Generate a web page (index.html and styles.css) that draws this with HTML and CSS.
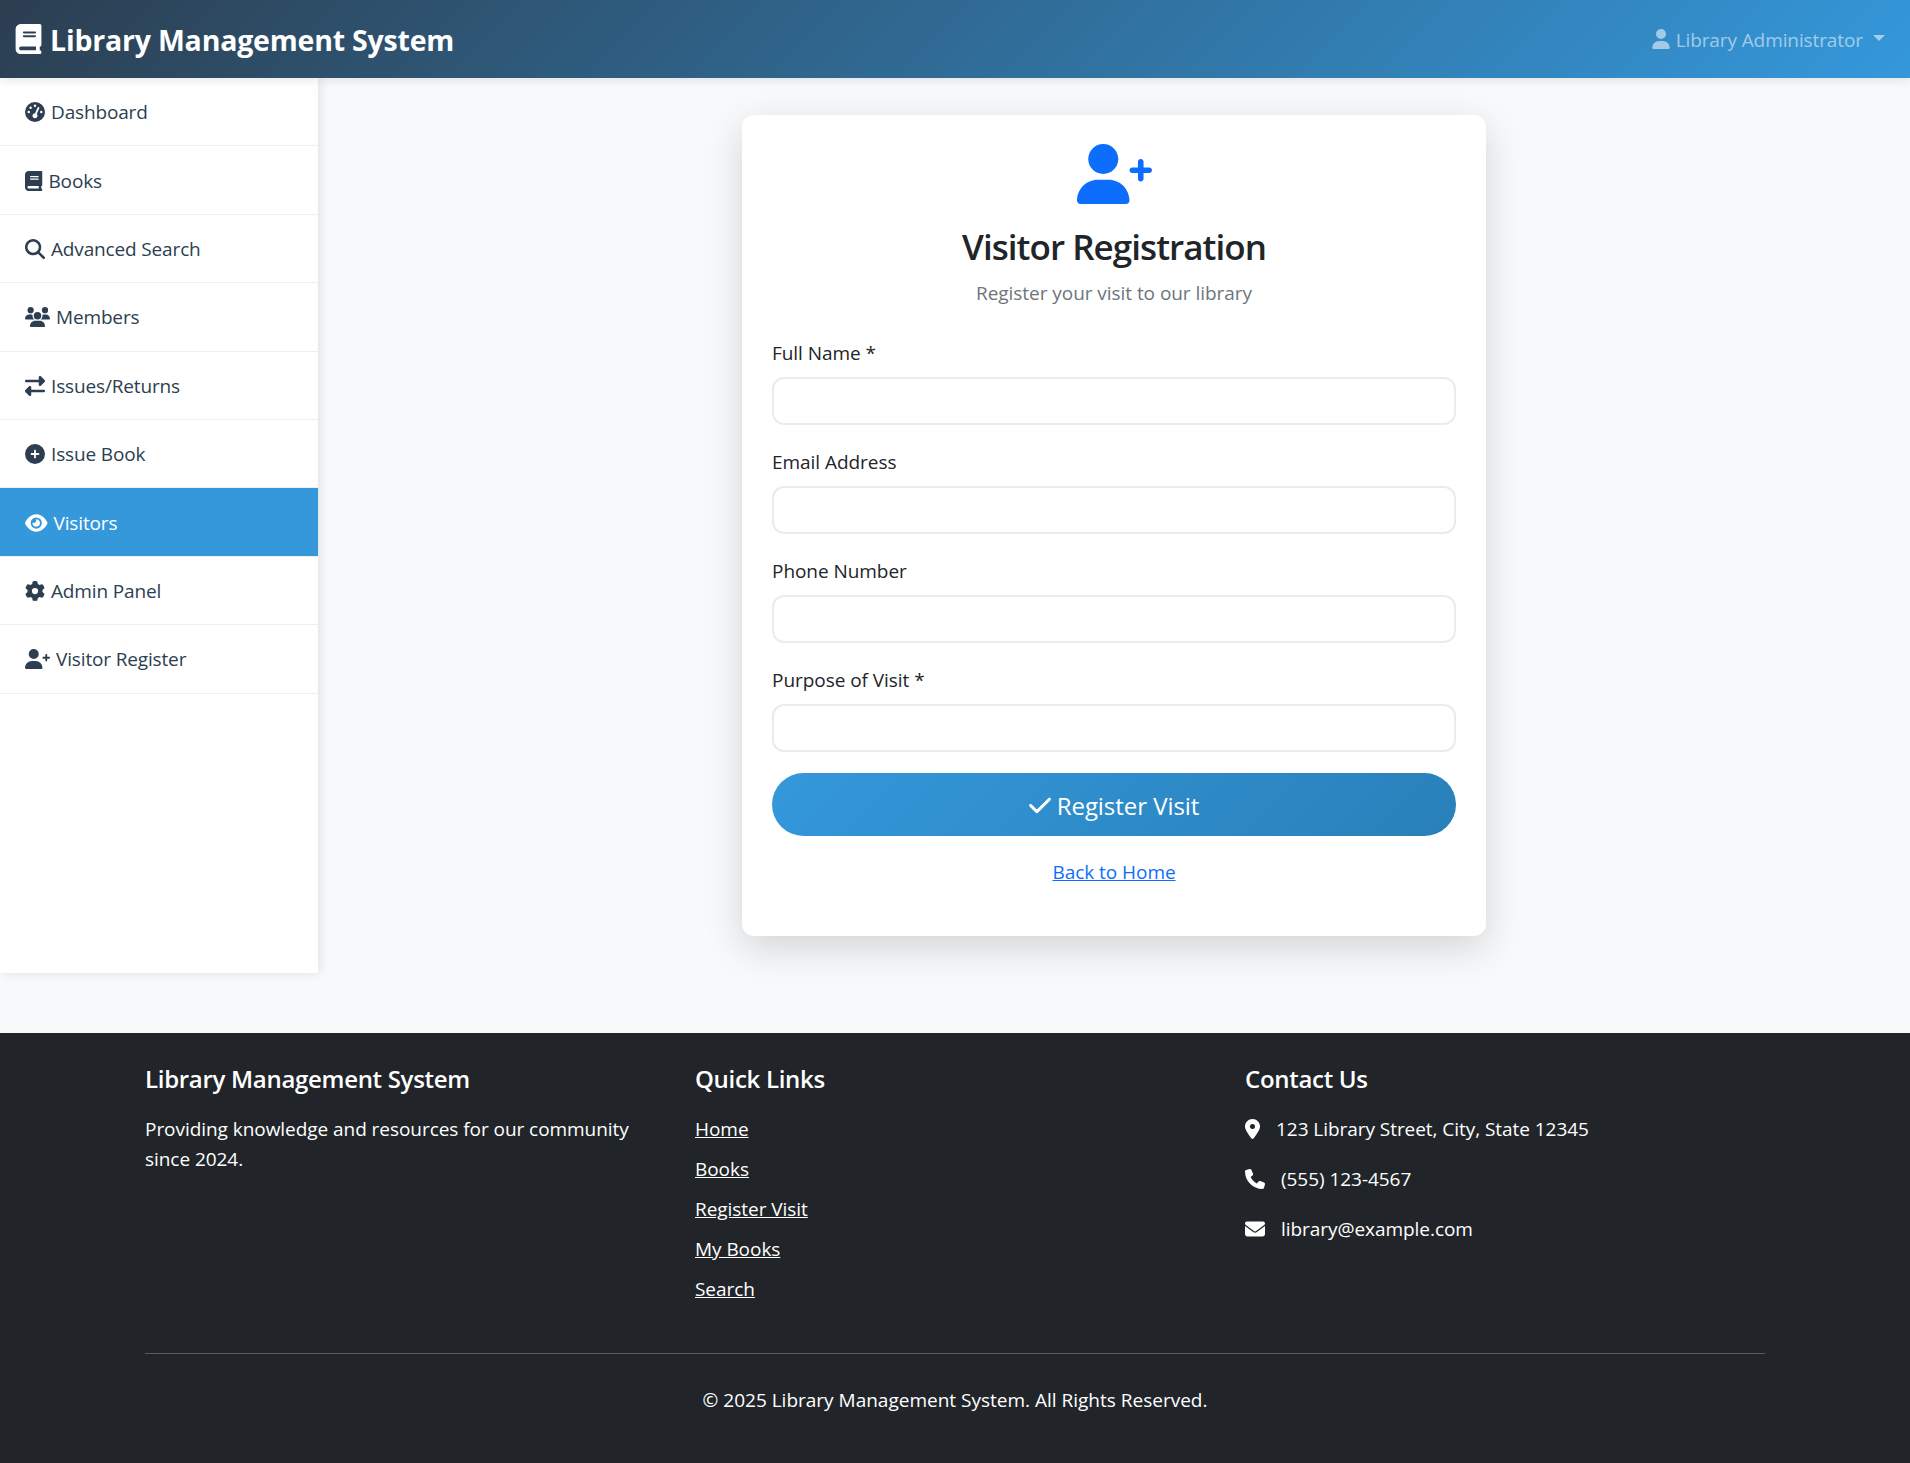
FILE: index.html
```html
<!DOCTYPE html>
<html lang="en">
<head>
  <meta charset="UTF-8">
  <meta name="viewport" content="width=device-width, initial-scale=1.0">
  <title>Visitor Registration</title>
  <link rel="stylesheet" href="styles.css">
</head>
<body>
  <svg class="sprite" xmlns="http://www.w3.org/2000/svg">
    <symbol id="i-book" viewBox="0 0 448 512"><path d="M96 0C43 0 0 43 0 96V416c0 53 43 96 96 96H384h32c17.7 0 32-14.3 32-32s-14.3-32-32-32V384c17.7 0 32-14.3 32-32V32c0-17.7-14.3-32-32-32H384 96zm0 384H352v64H96c-17.7 0-32-14.3-32-32s14.3-32 32-32zm32-240c0-8.8 7.2-16 16-16H336c8.8 0 16 7.2 16 16s-7.2 16-16 16H144c-8.8 0-16-7.2-16-16zm16 48H336c8.8 0 16 7.2 16 16s-7.2 16-16 16H144c-8.8 0-16-7.2-16-16s7.2-16 16-16z"/></symbol>
    <symbol id="i-user-plus" viewBox="0 0 640 512"><path d="M96 128a128 128 0 1 1 256 0A128 128 0 1 1 96 128zM0 482.3C0 383.8 79.8 304 178.3 304h91.4C368.2 304 448 383.8 448 482.3c0 16.4-13.3 29.7-29.7 29.7H29.7C13.3 512 0 498.7 0 482.3zM520 296V248H472c-13.3 0-24-10.7-24-24s10.7-24 24-24h48V152c0-13.3 10.7-24 24-24s24 10.7 24 24v48h48c13.3 0 24 10.7 24 24s-10.7 24-24 24H568v48c0 13.3-10.7 24-24 24s-24-10.7-24-24z"/></symbol>
  </svg>

  <nav class="navbar">
    <a class="brand" href="#">
      <svg class="brand-icon" viewBox="0 0 448 512"><use href="#i-book"/></svg>
      <span>Library Management System</span>
    </a>
    <a class="user-menu" href="#">
      <svg class="icon icon-user" viewBox="0 0 448 512"><path d="M224 256A128 128 0 1 0 224 0a128 128 0 1 0 0 256zm-45.7 48C79.8 304 0 383.8 0 482.3C0 498.7 13.3 512 29.7 512H418.3c16.4 0 29.7-13.3 29.7-29.7C448 383.8 368.2 304 269.7 304H178.3z"/></svg>
      <span>Library Administrator</span>
      <span class="caret"></span>
    </a>
  </nav>

  <div class="page">
    <aside class="sidebar">
      <a class="side-link" href="#">
        <svg class="icon w-20" viewBox="0 0 512 512"><path d="M0 256a256 256 0 1 1 512 0A256 256 0 1 1 0 256zM288 96a32 32 0 1 0 -64 0 32 32 0 1 0 64 0zM256 416c35.3 0 64-28.7 64-64c0-17.4-6.9-33.1-18.1-44.6L366 161.7c5.3-12.1-.2-26.3-12.3-31.6s-26.3 .2-31.6 12.3L257.9 288c-.6 0-1.3 0-1.9 0c-35.3 0-64 28.7-64 64s28.7 64 64 64zM176 144a32 32 0 1 0 -64 0 32 32 0 1 0 64 0zM96 288a32 32 0 1 0 0-64 32 32 0 1 0 0 64zm352-32a32 32 0 1 0 -64 0 32 32 0 1 0 64 0z"/></svg>
        Dashboard
      </a>
      <a class="side-link" href="#">
        <svg class="icon w-18" viewBox="0 0 448 512"><use href="#i-book"/></svg>
        Books
      </a>
      <a class="side-link" href="#">
        <svg class="icon w-20" viewBox="0 0 512 512"><path d="M416 208c0 45.9-14.9 88.3-40 122.7L502.6 457.4c12.5 12.5 12.5 32.8 0 45.3s-32.8 12.5-45.3 0L330.7 376c-34.4 25.2-76.8 40-122.7 40C93.1 416 0 322.9 0 208S93.1 0 208 0S416 93.1 416 208zM208 352a144 144 0 1 0 0-288 144 144 0 1 0 0 288z"/></svg>
        Advanced Search
      </a>
      <a class="side-link" href="#">
        <svg class="icon w-25" viewBox="0 0 640 512"><path d="M144 0a80 80 0 1 1 0 160A80 80 0 1 1 144 0zM512 0a80 80 0 1 1 0 160A80 80 0 1 1 512 0zM0 298.7C0 239.8 47.8 192 106.7 192h42.7c15.9 0 31 3.5 44.6 9.7c-1.3 7.2-1.9 14.7-1.9 22.3c0 38.2 16.8 72.5 43.3 96c-.2 0-.4 0-.7 0H21.3C9.6 320 0 310.4 0 298.7zM405.3 320c-.2 0-.4 0-.7 0c26.6-23.5 43.3-57.8 43.3-96c0-7.6-.7-15-1.9-22.3c13.6-6.3 28.7-9.7 44.6-9.7h42.7C592.2 192 640 239.8 640 298.7c0 11.8-9.6 21.3-21.3 21.3H405.3zM224 224a96 96 0 1 1 192 0 96 96 0 1 1 -192 0zM128 485.3C128 411.7 187.7 352 261.3 352H378.7C452.3 352 512 411.7 512 485.3c0 14.7-11.9 26.7-26.7 26.7H154.7c-14.7 0-26.7-11.9-26.7-26.7z"/></svg>
        Members
      </a>
      <a class="side-link" href="#">
        <svg class="icon w-20" viewBox="0 0 512 512"><path d="M32 96l320 0V32c0-12.9 7.8-24.6 19.8-29.6s25.7-2.2 34.9 6.9l96 96c6 6 9.4 14.1 9.4 22.6s-3.4 16.6-9.4 22.6l-96 96c-9.2 9.2-22.9 11.9-34.9 6.9s-19.8-16.6-19.8-29.6V160L32 160c-17.7 0-32-14.3-32-32s14.3-32 32-32zM480 352c17.7 0 32 14.3 32 32s-14.3 32-32 32H160v64c0 12.9-7.8 24.6-19.8 29.6s-25.7 2.2-34.9-6.9l-96-96c-6-6-9.4-14.1-9.4-22.6s3.4-16.6 9.4-22.6l96-96c9.2-9.2 22.9-11.9 34.9-6.9s19.8 16.6 19.8 29.6l0 64H480z"/></svg>
        Issues/Returns
      </a>
      <a class="side-link" href="#">
        <svg class="icon w-20" viewBox="0 0 512 512"><path d="M256 512A256 256 0 1 0 256 0a256 256 0 1 0 0 512zM232 344V280H168c-13.3 0-24-10.7-24-24s10.7-24 24-24h64V168c0-13.3 10.7-24 24-24s24 10.7 24 24v64h64c13.3 0 24 10.7 24 24s-10.7 24-24 24H280v64c0 13.3-10.7 24-24 24s-24-10.7-24-24z"/></svg>
        Issue Book
      </a>
      <a class="side-link active" href="#">
        <svg class="icon w-22" viewBox="0 0 576 512"><path d="M288 32c-80.8 0-145.5 36.8-192.6 80.6C48.6 156 17.3 208 2.5 243.7c-3.3 7.9-3.3 16.7 0 24.6C17.3 304 48.6 356 95.4 399.4C142.5 443.2 207.2 480 288 480s145.5-36.8 192.6-80.6c46.8-43.5 78.1-95.4 93-131.1c3.3-7.9 3.3-16.7 0-24.6c-14.9-35.7-46.2-87.7-93-131.1C433.5 68.8 368.8 32 288 32zM144 256a144 144 0 1 1 288 0 144 144 0 1 1 -288 0zm144-64c0 35.3-28.7 64-64 64c-7.1 0-13.9-1.2-20.3-3.3c-5.5-1.8-11.9 1.6-11.7 7.4c.3 6.9 1.3 13.8 3.2 20.7c13.7 51.2 66.4 81.6 117.6 67.9s81.6-66.4 67.9-117.6c-11.1-41.5-47.8-69.4-88.6-71.1c-5.8-.2-9.2 6.1-7.4 11.7c2.1 6.4 3.3 13.2 3.3 20.3z"/></svg>
        Visitors
      </a>
      <a class="side-link" href="#">
        <svg class="icon w-20" viewBox="0 0 512 512"><path d="M495.9 166.6c3.2 8.7 .5 18.4-6.4 24.6l-43.3 39.4c1.1 8.3 1.7 16.8 1.7 25.4s-.6 17.1-1.7 25.4l43.3 39.4c6.9 6.2 9.6 15.9 6.4 24.6c-4.4 11.9-9.7 23.3-15.8 34.3l-4.7 8.1c-6.6 11-14 21.4-22.1 31.2c-5.9 7.2-15.7 9.6-24.5 6.8l-55.7-17.7c-13.4 10.3-28.2 18.9-44 25.4l-12.5 57.1c-2 9.1-9 16.3-18.2 17.8c-13.8 2.3-28 3.5-42.5 3.5s-28.7-1.2-42.5-3.5c-9.2-1.5-16.2-8.7-18.2-17.8l-12.5-57.1c-15.8-6.5-30.6-15.1-44-25.4L83.1 425.9c-8.8 2.8-18.6 .3-24.5-6.8c-8.1-9.8-15.5-20.2-22.1-31.2l-4.7-8.1c-6.1-11-11.4-22.4-15.8-34.3c-3.2-8.7-.5-18.4 6.4-24.6l43.3-39.4C64.6 273.1 64 264.6 64 256s.6-17.1 1.7-25.4L22.4 191.2c-6.9-6.2-9.6-15.9-6.4-24.6c4.4-11.9 9.7-23.3 15.8-34.3l4.7-8.1c6.6-11 14-21.4 22.1-31.2c5.9-7.2 15.7-9.6 24.5-6.8l55.7 17.7c13.4-10.3 28.2-18.9 44-25.4l12.5-57.1c2-9.1 9-16.3 18.2-17.8C227.3 1.2 241.5 0 256 0s28.7 1.2 42.5 3.5c9.2 1.5 16.2 8.7 18.2 17.8l12.5 57.1c15.8 6.5 30.6 15.1 44 25.4l55.7-17.7c8.8-2.8 18.6-.3 24.5 6.8c8.1 9.8 15.5 20.2 22.1 31.2l4.7 8.1c6.1 11 11.4 22.4 15.8 34.3zM256 336a80 80 0 1 0 0-160 80 80 0 1 0 0 160z"/></svg>
        Admin Panel
      </a>
      <a class="side-link" href="#">
        <svg class="icon w-25" viewBox="0 0 640 512"><use href="#i-user-plus"/></svg>
        Visitor Register
      </a>
    </aside>

    <main class="main">
      <section class="card">
        <div class="card-head">
          <svg class="head-icon" viewBox="0 0 640 512"><use href="#i-user-plus"/></svg>
          <h1>Visitor Registration</h1>
          <p>Register your visit to our library</p>
        </div>
        <form>
          <div class="field">
            <label for="name">Full Name *</label>
            <input type="text" id="name">
          </div>
          <div class="field">
            <label for="email">Email Address</label>
            <input type="email" id="email">
          </div>
          <div class="field">
            <label for="phone">Phone Number</label>
            <input type="text" id="phone">
          </div>
          <div class="field">
            <label for="purpose">Purpose of Visit *</label>
            <input type="text" id="purpose">
          </div>
          <button type="submit">
            <svg class="icon icon-check" viewBox="0 0 448 512"><path d="M438.6 105.4c12.5 12.5 12.5 32.8 0 45.3l-256 256c-12.5 12.5-32.8 12.5-45.3 0l-128-128c-12.5-12.5-12.5-32.8 0-45.3s32.8-12.5 45.3 0L160 338.7 393.4 105.4c12.5-12.5 32.8-12.5 45.3 0z"/></svg>
            Register Visit
          </button>
        </form>
        <div class="back"><a href="#">Back to Home</a></div>
      </section>
    </main>
  </div>

  <footer class="footer">
    <div class="footer-inner">
      <div class="footer-cols">
        <div>
          <h5>Library Management System</h5>
          <p class="about">Providing knowledge and resources for our community since 2024.</p>
        </div>
        <div>
          <h5>Quick Links</h5>
          <ul class="links">
            <li><a href="#">Home</a></li>
            <li><a href="#">Books</a></li>
            <li><a href="#">Register Visit</a></li>
            <li><a href="#">My Books</a></li>
            <li><a href="#">Search</a></li>
          </ul>
        </div>
        <div>
          <h5>Contact Us</h5>
          <ul class="contact">
            <li>
              <svg class="icon w-15" viewBox="0 0 384 512"><path d="M215.7 499.2C267 435 384 279.4 384 192C384 86 298 0 192 0S0 86 0 192c0 87.4 117 243 168.3 307.2c12.3 15.3 35.1 15.3 47.4 0zM192 128a64 64 0 1 1 0 128 64 64 0 1 1 0-128z"/></svg>
              123 Library Street, City, State 12345
            </li>
            <li>
              <svg class="icon w-20" viewBox="0 0 512 512"><path d="M164.9 24.6c-7.7-18.6-28-28.5-47.4-23.2l-88 24C12.1 30.2 0 46 0 64C0 311.4 200.6 512 448 512c18 0 33.8-12.1 38.6-29.5l24-88c5.3-19.4-4.6-39.7-23.2-47.4l-96-40c-16.3-6.8-35.2-2.1-46.3 11.6L304.7 368C234.3 334.7 177.3 277.7 144 207.3L193.3 167c13.7-11.2 18.4-30 11.6-46.3l-40-96z"/></svg>
              (555) 123-4567
            </li>
            <li>
              <svg class="icon w-20" viewBox="0 0 512 512"><path d="M48 64C21.5 64 0 85.5 0 112c0 15.1 7.1 29.3 19.2 38.4L236.8 313.6c11.4 8.5 27 8.5 38.4 0L492.8 150.4c12.1-9.1 19.2-23.3 19.2-38.4c0-26.5-21.5-48-48-48H48zM0 176V384c0 35.3 28.7 64 64 64H448c35.3 0 64-28.7 64-64V176L294.4 339.2c-22.8 17.1-52 17.1-76.8 0L0 176z"/></svg>
              library@example.com
            </li>
          </ul>
        </div>
      </div>
      <hr>
      <p class="copyright">© 2025 Library Management System. All Rights Reserved.</p>
    </div>
  </footer>
</body>
</html>
```

FILE: styles.css
```css
* {
  box-sizing: border-box;
}
body {
  margin: 0;
  font-family: "Open Sans", "Noto Sans", sans-serif;
  font-size: 19px;
  line-height: 30px;
  letter-spacing: -0.05px;
  color: #212529;
  background-color: #f8f9fa;
}
a {
  color: inherit;
}
.sprite {
  display: none;
}
.icon {
  height: 20px;
  flex-shrink: 0;
  fill: currentColor;
}
.w-15 { width: 15px; }
.w-18 { width: 17.5px; }
.w-20 { width: 20px; }
.w-22 { width: 22.5px; }
.w-25 { width: 25px; }

/* top bar */
.navbar {
  position: relative;
  z-index: 2;
  display: flex;
  justify-content: space-between;
  align-items: center;
  height: 78px;
  padding: 0 25px 0 15px;
  background: linear-gradient(135deg, #2c3e50, #3498db);
  box-shadow: 0 2px 10px rgba(0, 0, 0, 0.1);
}
.brand {
  display: flex;
  align-items: center;
  gap: 8px;
  color: #fff;
  text-decoration: none;
  font-size: 28.5px;
  font-weight: 700;
  letter-spacing: -0.2px;
}
.brand span {
  padding-top: 1px;
}
.brand-icon {
  width: 27px;
  height: 30px;
  fill: #fff;
}
.user-menu {
  display: flex;
  align-items: center;
  gap: 6px;
  color: rgba(255, 255, 255, 0.55);
  text-decoration: none;
  letter-spacing: -0.1px;
}
.user-menu span {
  padding-top: 2px;
}
.icon-user {
  width: 18px;
}
.caret {
  width: 0;
  height: 0;
  margin-left: 4px;
  padding: 0;
  border-top: 6px solid;
  border-left: 6px solid transparent;
  border-right: 6px solid transparent;
}

/* sidebar and content */
.page {
  display: flex;
  align-items: stretch;
}
.sidebar {
  flex: 0 0 318px;
  background-color: #fff;
  box-shadow: 2px 0 10px rgba(0, 0, 0, 0.1);
}
.side-link {
  display: flex;
  align-items: center;
  gap: 6px;
  height: 68.4px;
  padding: 1px 0 0 25px;
  border-bottom: 1px solid #ecf0f1;
  color: #2c3e50;
  text-decoration: none;
  letter-spacing: -0.15px;
}
.side-link.active {
  background-color: #3498db;
  color: #fff;
}
.main {
  flex: 1;
  padding: 37px 0;
}
.card {
  width: 744px;
  margin: 0 auto;
  padding: 29px 30px 49px;
  background-color: #fff;
  border-radius: 12px;
  box-shadow: 0 12px 38px rgba(0, 0, 0, 0.15);
}
.card-head {
  text-align: center;
  margin-bottom: 29px;
}
.head-icon {
  display: block;
  width: 75px;
  height: 60px;
  margin: 0 auto 20px;
  fill: #0d6efd;
}
.card-head h1 {
  margin: -1px 0 7px;
  font-size: 35px;
  font-weight: 600;
  line-height: 48px;
  letter-spacing: -0.95px;
}
.card-head p {
  margin: 0;
  color: #6c757d;
}
.field {
  margin-bottom: 21px;
}
label {
  display: block;
  padding-top: 1px;
  margin-bottom: 9px;
}
input {
  display: block;
  width: 100%;
  height: 48px;
  padding: 0 15px;
  background-color: #fff;
  border: 2.5px solid #e9ecef;
  border-radius: 12px;
  font: inherit;
}
button {
  display: flex;
  justify-content: center;
  align-items: center;
  gap: 6px;
  width: 100%;
  height: 63px;
  padding: 2px 0 0;
  border: none;
  border-radius: 32px;
  background: linear-gradient(135deg, #3498db, #2980b9);
  color: #fff;
  font: inherit;
  font-size: 24px;
  letter-spacing: -0.05px;
  cursor: pointer;
}
.icon-check {
  width: 22px;
  height: 25px;
}
.back {
  margin-top: 21px;
  text-align: center;
}
.back a {
  color: #0d6efd;
}

/* footer */
.footer {
  margin-top: 60px;
  height: 430px;
  padding-top: 31px;
  background-color: #212529;
  color: #fff;
}
.footer-inner {
  width: 1620px;
  margin: 0 auto;
}
.footer-cols {
  display: grid;
  grid-template-columns: repeat(3, 1fr);
  gap: 30px;
}
.footer h5 {
  margin: 0 0 20px;
  font-size: 24px;
  font-weight: 600;
  line-height: 30px;
  letter-spacing: -0.3px;
}
.about {
  margin: 0;
}
.links,
.contact {
  margin: 0;
  padding: 0;
  list-style: none;
}
.links li {
  margin-bottom: 10px;
}
.contact li {
  display: flex;
  align-items: center;
  gap: 16px;
  margin-bottom: 20px;
}
.footer hr {
  margin: 39px 0 31px;
  border: none;
  border-top: 1px solid rgba(255, 255, 255, 0.25);
}
.copyright {
  margin: 0;
  text-align: center;
  letter-spacing: 0;
}
```
